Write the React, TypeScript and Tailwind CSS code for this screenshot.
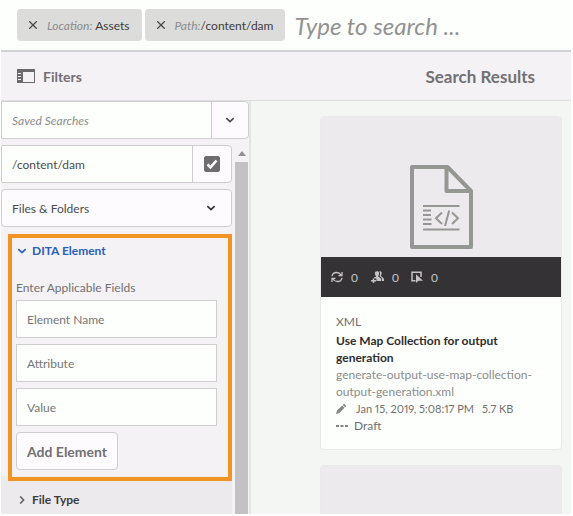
import { useState } from "react";

type IconProps = { className?: string };

function Cross() {
  return (
    <svg viewBox="0 0 8 8" className="size-2" aria-hidden="true">
      <path d="M0.3 0.3 7.7 7.7M7.7 0.3 0.3 7.7" stroke="#4a4a4a" strokeWidth="1.3" />
    </svg>
  );
}

function Chevron({ className = "" }: IconProps) {
  return (
    <svg viewBox="0 0 8 8" className={`size-2 shrink-0 ${className}`} fill="none" stroke="currentColor" strokeWidth="1.6" aria-hidden="true">
      <path d="M0.4 2.2 4 5.600 7.600 2.2" />
    </svg>
  );
}

function RailIcon() {
  return (
    <svg viewBox="0 0 18 14" className="h-3.5 w-[18px]" aria-hidden="true">
      <path d="M0 0H18V14H0Z" fill="#6b696b" />
      <path d="M6 3H17V13H6Z" fill="#f4f2f5" />
      <path d="M1 4.5H4M1 7.5H4M1 10.5H4" stroke="#f4f2f5" />
    </svg>
  );
}

function XmlFile() {
  return (
    <svg viewBox="0 0 63 84" className="h-[84px] w-[63px]" fill="none" stroke="#959793" aria-hidden="true">
      <path d="M2 2H37.500L61 26V82H2ZM36.500 2V26H61" strokeWidth="4" strokeLinejoin="round" />
      <path d="M13 41H49.500M13 64.500H49.500" strokeWidth="2" />
      <path d="M13 45.500H21M13 50H21M13 54.500H21.500M13 59H21.500" strokeWidth="1.8" />
      <path d="M32 47.500 26 53.200 32 59M42 47.500 48 53.200 42 59M39.200 45.500 35 61" strokeWidth="2" />
    </svg>
  );
}

function SyncIcon() {
  return (
    <svg viewBox="0 0 12 12" className="size-3" fill="none" stroke="#c4c4c4" strokeWidth="1.3" aria-hidden="true">
      <path d="M1 5.200C1.500 2.500 3.500 1.500 5.500 1.500 7.500 1.500 9 2.300 10 4M11 1V4.700H7.500M11 6.800C10.500 9.500 8.500 10.500 6.500 10.500 4.500 10.500 3 9.700 2 8M1 11V7.300H4.500" />
    </svg>
  );
}

function PeopleIcon() {
  return (
    <svg viewBox="0 0 13 12" className="h-3 w-[13px]" fill="#c4c4c4" aria-hidden="true">
      <path d="M6 0.300C8 0 8.500 1.500 8 3.200 7.800 4.500 7.300 4.600 7.300 5.400 7.500 6 10.200 6.500 10.200 8.800V10H5.400V7.500H2.800V6.700C4 6 5 6 5 5.300 5 4.800 3.800 4 3.800 2.500 3.800 1.200 4.800 0.300 6 0.300Z" />
      <path d="M8.300 0.300C10.700 0 11 1.500 10.500 3.200 10.300 4 9.900 4.400 9.900 5 10.500 5.800 13 6.300 13 8.800V10H10.900V8.200C10.900 6.500 9.200 5.600 8.500 5.200 9.300 3.500 9.300 1.800 8.300 0.300Z" />
      <path d="M1.800 7.500H3.200V9H5V10.400H3.200V12H1.800V10.400H0V9H1.800Z" />
    </svg>
  );
}

function PointerIcon() {
  return (
    <svg viewBox="0 0 12 12" className="size-3" aria-hidden="true">
      <path d="M4.500 9.800H1V1.200H10V6" fill="none" stroke="#c4c4c4" strokeWidth="1.5" />
      <path d="M5 3.300V12L7.500 9.800H12Z" fill="#c4c4c4" />
    </svg>
  );
}

function Pencil() {
  return (
    <svg viewBox="0 0 10 10" className="size-2.5" fill="#858585" aria-hidden="true">
      <path d="M0 10 1 6.600 6.200 1.500 8.500 3.800 3.400 9ZM6.800 0.900 7.700 0H8.300L10 1.700V2.300L9.100 3.200Z" />
    </svg>
  );
}

function Tag({ label, value }: { label: string; value: string }) {
  return (
    <div className="flex h-8 shrink-0 items-center gap-2.5 rounded bg-[#dcdddb] px-3 whitespace-pre text-[#3c3c3c]">
      <button type="button" aria-label={"Remove " + value}>
        <Cross />
      </button>
      <span>
        <i className="text-[#8c8c8c]">{label}</i>
        {value}
      </span>
    </div>
  );
}

function Stat({ icon }: { icon: React.ReactNode }) {
  return (
    <span className="flex w-10 items-center gap-2">
      {icon}
      <span>0</span>
    </span>
  );
}

export default function App() {
  const [checked, setChecked] = useState(true);
  return (
    <div className="flex h-screen flex-col overflow-hidden bg-white pr-0.5 pb-0.5 pl-px font-[Lato,sans-serif] text-[12px] leading-[17px] text-[#4b4b4b]">
      <header className="flex h-[52px] shrink-0 gap-[3px] border-b-2 border-[#d2d1d3] bg-[#fdfffc] pt-[9px] pl-4">
        <Tag label="Location: " value="Assets" />
        <Tag label="Path:" value="/content/dam" />
        <input
          type="text"
          aria-label="Search"
          placeholder="Type to search ..."
          className="ml-1.5 h-8 min-w-0 flex-1 bg-transparent text-[24px] italic outline-none placeholder:text-[#929292]"
        />
      </header>

      <div className="flex h-[49px] shrink-0 items-center justify-between border-b border-[#dedddf] bg-[#f4f2f5] pr-9 pl-4 font-bold text-[#727072]">
        <button type="button" className="flex items-center gap-2 text-[14px]">
          <RailIcon />
          Filters
        </button>
        <h1 className="text-[17px]">Search Results</h1>
      </div>

      <div className="flex min-h-0 flex-1">
        <aside className="flex w-[250px] shrink-0 flex-col overflow-hidden border-r-2 border-[#e2e5e1] bg-[#f4f2f5]">
          <div className="flex h-[38px] shrink-0 rounded-r border border-[#cfcdd0] bg-[#fdfbfe]">
            <input
              type="text"
              aria-label="Saved searches"
              placeholder="Saved Searches"
              className="min-w-0 flex-1 bg-[#fdfffc] px-2.5 italic outline-none placeholder:text-[#8c8c8c]"
            />
            <button type="button" aria-label="Show saved searches" className="flex w-[37px] items-center justify-center border-l border-[#cfcdd0]">
              <Chevron />
            </button>
          </div>

          <div className="flex min-h-0 flex-1 pt-1.5">
            <div className="flex min-w-0 flex-1 flex-col overflow-hidden">
              <div className="flex h-[38px] shrink-0 rounded-r border border-[#cfcdd0] bg-[#fdfbfe]">
                <input type="text" aria-label="Path" defaultValue="/content/dam" className="min-w-0 flex-1 bg-[#fdfffc] px-2.5 outline-none" />
                <label className="flex w-[39px] items-center justify-center border-l border-[#cfcdd0]">
                  <input
                    type="checkbox"
                    aria-label="Search in path"
                    checked={checked}
                    onChange={() => setChecked(!checked)}
                    className="peer size-4 appearance-none rounded-xs border border-[#6f6d70] checked:bg-[#6f6d70]"
                  />
                  <svg viewBox="0 0 16 16" className="pointer-events-none invisible absolute size-4 peer-checked:visible" fill="none" stroke="#fff" strokeWidth="2.600" aria-hidden="true">
                    <path d="M3.500 8.500 6.500 11.300 12.500 4.500" />
                  </svg>
                </label>
              </div>

              <div className="mt-1.5 flex h-[38px] shrink-0 items-center rounded border border-[#cfcdd0] bg-[#fdfbfe]">
                <select aria-label="Type of result" className="h-full w-full appearance-none px-2.5 outline-none">
                  <option>Files &amp; Folders</option>
                </select>
                <Chevron className="pointer-events-none mr-[15px] -ml-6 text-[#333]" />
              </div>

              <div className="mt-[7px] flex flex-1 flex-col bg-linear-to-b from-[#f4f2f5] from-[242px] to-[#eceaed] to-[242px]">
                <section className="ml-[7px] h-[247px] shrink-0 border-4 border-[#f29423] px-1">
                  <button type="button" className="mt-1 ml-0.5 flex items-center gap-1.5 font-bold text-[#2b5fbe]">
                    <Chevron />
                    DITA Element
                  </button>
                  <h2 className="mt-5 mb-1 text-[#727072]">Enter Applicable Fields</h2>
                  <div className="flex flex-col items-start gap-1.5 pr-[7px]">
                    {["Element Name", "Attribute", "Value"].map((name) => (
                      <input
                        key={name}
                        type="text"
                        aria-label={name}
                        placeholder={name}
                        className="h-[38px] w-full border border-[#cfcdd0] bg-[#fdfffc] px-2.5 outline-none placeholder:text-[#767676]"
                      />
                    ))}
                    <button type="button" className="h-[38px] rounded border border-[#cfcdd0] bg-[#fdfbfe] px-2.5 text-[14px] font-bold text-[#727072]">
                      Add Element
                    </button>
                  </div>
                </section>
                <button type="button" className="mt-2.5 ml-[17px] flex items-center gap-1.5 font-bold text-[#3c3c3c]">
                  <Chevron className="-rotate-90 text-[#666]" />
                  File Type
                </button>
              </div>
            </div>

            <div className="ml-0.5 flex w-[15px] shrink-0 flex-col items-center" aria-hidden="true">
              <svg viewBox="0 0 8 5" className="mt-1.5 mb-1.5 h-[5px] w-2 shrink-0" fill="#929092">
                <path d="M0 5 4 0 8 5Z" />
              </svg>
              <div className="w-[13px] flex-1 bg-[#c4c1c5]" />
            </div>
          </div>
        </aside>

        <main className="flex min-w-0 flex-1 flex-col gap-[15px] overflow-hidden bg-[#f4f6f3] pt-[15px] pr-[9px] pl-[69px]">
          <article className="shrink-0 overflow-hidden rounded border border-[#e8e9e8] bg-[#fdfffc]">
            <div className="flex h-[140px] items-end justify-center bg-[#eceaed] pb-2">
              <XmlFile />
            </div>
            <div className="flex h-10 items-center bg-[#353235] pl-2.5 text-[#c4c4c4]">
              <Stat icon={<SyncIcon />} />
              <Stat icon={<PeopleIcon />} />
              <Stat icon={<PointerIcon />} />
            </div>
            <div className="px-[15px] pt-4 pb-[15px] text-[#727072]">
              <p>XML</p>
              <h3 className="mt-0.5 font-bold text-[#2f2d2f]">Use Map Collection for output generation</h3>
              <p className="text-[#8c8c8c]">generate-output-use-map-collection-output-generation.xml</p>
              <p className="flex items-center text-[11px] whitespace-nowrap proportional-nums">
                <Pencil />
                <span className="ml-2.5">Jan 15, 2019, 5:08:17 PM</span>
                <span className="ml-2">5.7 KB</span>
              </p>
              <p className="flex items-center gap-1.5">
                <svg viewBox="0 0 12 2" className="h-0.5 w-3" fill="#858585" aria-hidden="true">
                  <path d="M0 0H3V2H0ZM4.500 0H7.500V2H4.500ZM9 0H12V2H9Z" />
                </svg>
                Draft
              </p>
            </div>
          </article>
          <article className="h-[334px] shrink-0 rounded border border-[#e8e9e8] bg-[#eceaed]" />
        </main>
      </div>
    </div>
  );
}
